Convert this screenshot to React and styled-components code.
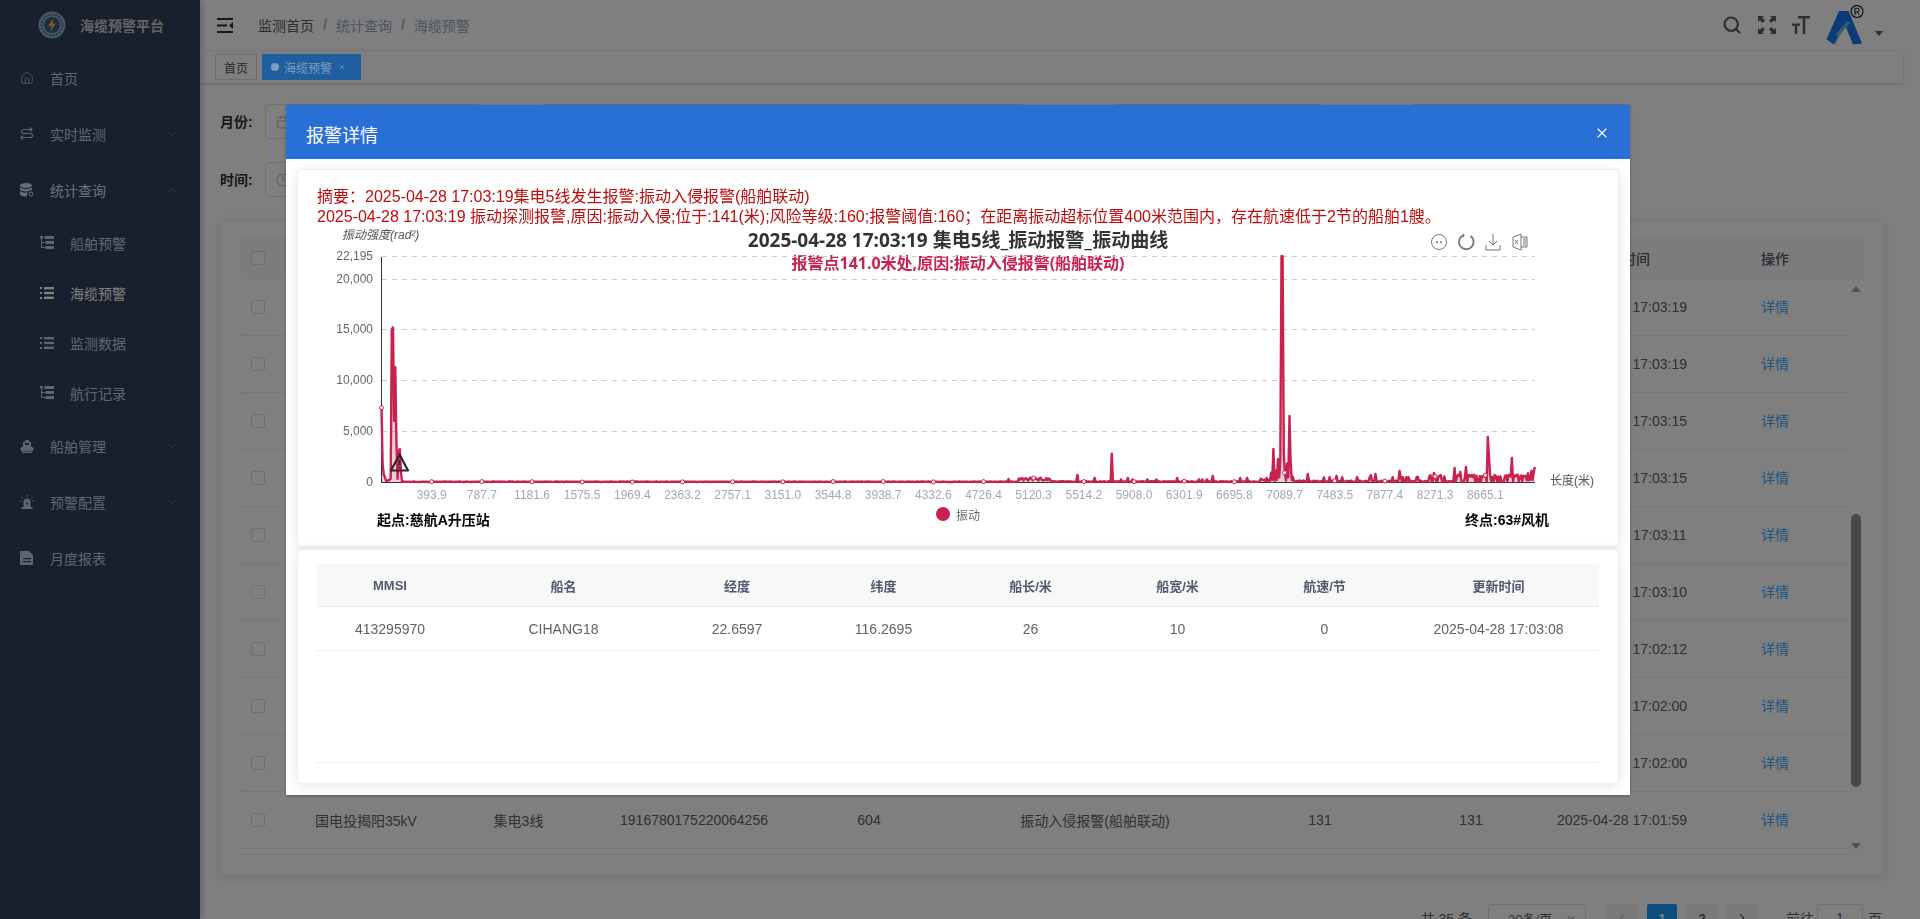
import React from 'react';
import styled, { createGlobalStyle } from 'styled-components';
import { Home, ChevronDown, ChevronUp, ChevronLeft, ChevronRight, Search, Calendar, Clock, X } from 'lucide-react';

const FONT = '"Liberation Sans", "Noto Sans CJK SC", sans-serif';
const TITLE_FONT = '"Noto Sans", "Noto Sans CJK SC", sans-serif';
const LINE_RED = '#c9224f';

const GlobalStyle = createGlobalStyle`
  html, body { margin: 0; padding: 0; height: 100%; overflow: hidden; background: #fff; }
  body { font-family: ${FONT}; font-size: 14px; color: #303133; }
  * { box-sizing: border-box; }
`;

const Shell = styled.div`
  display: flex;
  width: 1920px;
  height: 919px;
  overflow: hidden;
`;

const Sidebar = styled.aside`
  flex: 0 0 200px;
  background: #30415a;
  box-shadow: 2px 0 6px rgba(0, 0, 0, 0.2);
`;

const Brand = styled.div`
  display: flex;
  align-items: center;
  gap: 14px;
  height: 50px;
  padding-left: 38px;
  color: #c8c8c8;
  font-size: 14px;
  font-weight: bold;
`;

const MenuRow = styled.div`
  display: flex;
  align-items: center;
  height: ${p => (p.$sub ? 50 : 56)}px;
  padding: 0 21px 0 ${p => (p.$sub ? 40 : 20)}px;
  gap: 16px;
  font-size: 14px;
  color: ${p => (p.$active ? '#ffffff' : p.$open ? '#d9e0ea' : '#bfcbd9')};
  svg { flex: none; }
`;

const Caret = styled.span`
  display: flex;
  margin-left: auto;
  color: #8a97a8;
`;

const Main = styled.main`
  flex: 0 0 1703px;
  display: flex;
  flex-direction: column;
  > * { flex: none; }
`;

const TopBar = styled.header`
  display: flex;
  align-items: center;
  height: 50px;
  padding-left: 17px;
  color: #5a5e66;
`;

const Crumbs = styled.nav`
  display: flex;
  align-items: center;
  margin-left: 25px;
  font-size: 14px;
`;

const Crumb = styled.span`
  color: ${p => (p.$strong ? '#55585e' : '#97a8be')};
`;

const CrumbSep = styled.span`
  margin: 0 9px;
  color: #a9b5c6;
  font-weight: bold;
`;

const TopTools = styled.div`
  display: flex;
  align-items: center;
  gap: 16px;
  margin-left: auto;
  height: 50px;
  padding-right: 20px;
  color: #5a5e66;
`;

const Avatar = styled.div`
  display: flex;
  align-items: flex-end;
  gap: 11px;
`;

const CaretDown = styled.span`
  width: 0;
  height: 0;
  margin-bottom: 9px;
  border-left: 4px solid transparent;
  border-right: 4px solid transparent;
  border-top: 5px solid #5a5e66;
`;

const TagBar = styled.div`
  display: flex;
  align-items: center;
  gap: 5px;
  height: 33px;
  padding: 3px 0 3px 15px;
  border-top: 1px solid #f0f0f0;
  box-shadow: 0 1px 3px rgba(0, 0, 0, 0.18);
`;

const PlainTag = styled.span`
  display: flex;
  align-items: center;
  justify-content: center;
  width: 42px;
  height: 26px;
  border: 1px solid #d8dce5;
  font-size: 12px;
  color: #495060;
`;

/* sits above the mask in the reference: the blue stays bright */
const ActiveTag = styled.span`
  position: relative;
  z-index: 2100;
  display: flex;
  align-items: center;
  width: 99px;
  height: 26px;
  padding-left: 9px;
  background: #205f9f;
  font-size: 12px;
  color: #7f9dbd;
`;

const TagDot = styled.i`
  width: 8px;
  height: 8px;
  margin-right: 5px;
  border-radius: 50%;
  background: #7f9dbd;
`;

const TagClose = styled.span`
  display: flex;
  margin-left: 6px;
`;

const Filters = styled.section`
  display: flex;
  flex-direction: column;
  gap: 23px;
  padding: 21px 20px 23px;
`;

const FilterRow = styled.div`
  display: flex;
  align-items: center;
`;

const FilterLabel = styled.label`
  width: 45px;
  margin-bottom: 2px;
  font-size: 14px;
  font-weight: bold;
  color: #333;
`;

const FilterInput = styled.div`
  display: flex;
  align-items: center;
  width: ${p => p.$w}px;
  height: 35px;
  margin-right: ${p => p.$gap || 0}px;
  padding-left: 10px;
  border: 1px solid #dcdfe6;
  border-radius: 4px;
  color: #c0c4cc;
`;

const ListCard = styled.section`
  width: 1664px;
  height: 656px;
  margin-left: 20px;
  padding: 15px 19px 0 20px;
  border: 1px solid #ebeef5;
  border-radius: 4px;
  box-shadow: 0 2px 12px rgba(0, 0, 0, 0.1);
`;

const COLS = '54px 142px 163px 188px 162px 290px 160px 142px 160px 146px';

const ListHead = styled.div`
  display: grid;
  grid-template-columns: ${COLS};
  align-items: center;
  justify-items: center;
  width: 1623px;
  height: 43px;
  padding-right: 16px;
  background: #f8f8f9;
  font-size: 14px;
  font-weight: 500;
  color: #515a6e;
`;

const ListBody = styled.div`
  display: flex;
  width: 1623px;
  height: 569px;
`;

const ListRows = styled.div`
  width: 1607px;
`;

const ListRow = styled.div`
  display: grid;
  grid-template-columns: ${COLS};
  align-items: center;
  justify-items: center;
  height: 57px;
  border-bottom: 1px solid #ebeef5;
  font-size: 14px;
  color: #606266;
`;

const Check = styled.span`
  justify-self: start;
  width: 14px;
  height: 14px;
  margin-left: 10px;
  border: 1px solid #dcdfe6;
  border-radius: 2px;
  background: #fff;
`;

const DetailLink = styled.a`
  margin-bottom: 2px;
  color: #3fa9ff;
  cursor: pointer;
`;

const ScrollTrack = styled.div`
  display: flex;
  flex-direction: column;
  align-items: center;
  width: 16px;
  padding-top: 7px;
`;

const ScrollArrow = styled.i`
  width: 0;
  height: 0;
  border-left: 5px solid transparent;
  border-right: 5px solid transparent;
  ${p => (p.$down
    ? 'margin-top: auto; margin-bottom: -1px; border-top: 6px solid #a3a3a3;'
    : 'border-bottom: 6px solid #a3a3a3;')}
`;

const ScrollThumb = styled.div`
  width: 10px;
  height: 273px;
  margin-top: 222px;
  border-radius: 5px;
  background: #929292;
`;

const ListFooter = styled.div`
  width: 1607px;
  height: 7px;
  border-bottom: 1px solid #ebeef5;
`;

const Pager = styled.nav`
  display: flex;
  align-items: center;
  height: 28px;
  margin-top: 28px;
  padding-right: 21px;
  justify-content: flex-end;
  font-size: 14px;
  color: #606266;
`;

const PagerSelect = styled.div`
  display: flex;
  align-items: center;
  justify-content: space-between;
  width: 98px;
  height: 28px;
  margin: 0 21px 0 16px;
  padding: 0 8px 0 19px;
  border: 1px solid #dcdfe6;
  border-radius: 3px;
  font-size: 13px;
`;

const PageButton = styled.span`
  display: flex;
  align-items: center;
  justify-content: center;
  width: 30px;
  height: 28px;
  margin-right: 10px;
  border-radius: 2px;
  font-size: 13px;
  font-weight: bold;
  background: ${p => (p.$active ? '#1a9cff' : '#f4f4f5')};
  color: ${p => (p.$active ? '#fff' : p.$muted ? '#c0c4cc' : '#606266')};
`;

const PagerJump = styled.span`
  margin-left: 19px;
`;

const PagerInput = styled.span`
  display: flex;
  align-items: center;
  justify-content: center;
  width: 46px;
  height: 28px;
  margin: 0 5px 0 3px;
  border: 1px solid #dcdfe6;
  border-radius: 3px;
`;

const Mask = styled.div`
  position: fixed;
  inset: 0;
  z-index: 2000;
  background: rgba(0, 0, 0, 0.5);
`;

const Dialog = styled.div`
  position: relative;
  width: 1344px;
  height: 690px;
  margin: 105px 0 0 286px;
  background: #fff;
  box-shadow: 0 1px 3px rgba(0, 0, 0, 0.3);
`;

const DialogHead = styled.header`
  display: flex;
  align-items: center;
  height: 54px;
  padding: 10px 20px 6px;
  background: #2970d6;
  font-size: 18px;
  color: #fff;
`;

const DialogClose = styled.button`
  position: absolute;
  top: 20px;
  right: 20px;
  display: flex;
  padding: 0;
  border: none;
  background: none;
  color: #fff;
`;

const DialogBody = styled.div`
  display: flex;
  flex-direction: column;
  gap: 2px;
  padding: 10px 11px 0;
`;

const Card = styled.div`
  border: 1px solid #ebeef5;
  border-radius: 4px;
  background: #fff;
  box-shadow: 0 2px 12px rgba(0, 0, 0, 0.1);
`;

const ChartCard = styled(Card)`
  height: 378px;
  padding-top: 17px;
`;

const Summary = styled.p`
  margin: 0;
  padding-left: 19px;
  font-size: 16px;
  line-height: 20px;
  white-space: nowrap;
  color: #bf0d0d;
`;

const ChartSvg = styled.svg`
  display: block;
`;

const AxisText = styled.text`
  font-family: ${FONT};
  font-size: 12px;
  fill: ${p => p.$fill || '#666'};
  text-anchor: ${p => p.$anchor || 'middle'};
`;

const YName = styled.text`
  font-family: ${FONT};
  font-size: 12px;
  font-style: italic;
  fill: #555;
`;

const ChartTitle = styled.text`
  font-family: ${TITLE_FONT};
  font-size: 19px;
  font-weight: bold;
  fill: #333;
  text-anchor: middle;
`;

const ChartSubtitle = styled.text`
  font-family: ${TITLE_FONT};
  font-size: 16px;
  font-weight: bold;
  fill: ${LINE_RED};
  text-anchor: middle;
`;

const ChartFoot = styled.div`
  display: grid;
  grid-template-columns: 559px auto 1fr;
  padding: 0 69px 0 79px;
`;

const EndLabel = styled.span`
  margin-top: 3px;
  font-size: 14px;
  font-weight: bold;
  line-height: 20px;
  color: #000;
  text-align: ${p => (p.$right ? 'right' : 'left')};
`;

const Legend = styled.span`
  display: flex;
  align-items: center;
  gap: 6px;
  height: 14px;
  font-size: 12px;
  color: #666;
`;

const LegendDot = styled.i`
  width: 14px;
  height: 14px;
  border-radius: 50%;
  background: ${LINE_RED};
`;

const ShipCard = styled(Card)`
  height: 235px;
  padding: 14px 19px 0;
`;

const SHIP_COLS = '146px 201px 146px 147px 147px 147px 147px 201px';

const ShipHead = styled.div`
  display: grid;
  grid-template-columns: ${SHIP_COLS};
  align-items: center;
  justify-items: center;
  height: 43px;
  border-bottom: 1px solid #e4e7ed;
  background: #f8f8f9;
  font-size: 13px;
  font-weight: bold;
  color: #515a6e;
`;

const ShipRow = styled.div`
  display: grid;
  grid-template-columns: ${SHIP_COLS};
  align-items: center;
  justify-items: center;
  height: 44px;
  border-bottom: 1px solid #ebeef5;
  font-size: 14px;
  color: #606266;
`;

const ShipEmpty = styled.div`
  height: 112px;
  border-bottom: 1px solid #ebeef5;
`;

/* ---- icons ---- */

const CableLogo = () => (
  <svg width="28" height="28" viewBox="0 0 28 28">
    <circle cx="14" cy="14" r="13.4" fill="#8fb0c8" />
    <circle cx="14" cy="14" r="10.5" fill="none" stroke="#4a6f90" strokeWidth="2" strokeDasharray="2 1.5" />
    <circle cx="14" cy="14" r="8" fill="#3d5a78" />
    <path d="M15.5 7 10 15h3.4l-1.2 6 5.8-8.4h-3.4z" fill="#e8b93a" />
  </svg>
);

const SwapIcon = () => (
  <svg width="14" height="14" viewBox="0 0 14 14" fill="none" stroke="#bfcbd9" strokeWidth="1.2">
    <path d="M12 2.5H3.5a2 2 0 0 0-2 2v0a2 2 0 0 0 2 2h7a2 2 0 0 1 2 2v0a2 2 0 0 1-2 2H1.5" />
    <path d="M3 13l-2-2.5L3 8.5M10 .5l2 2-2 2" />
  </svg>
);

const DbIcon = () => (
  <svg width="14" height="14" viewBox="0 0 14 14" fill="#d0d8e2">
    <ellipse cx="6" cy="2.5" rx="6" ry="2.5" />
    <path d="M0 4v2c0 1.4 2.7 2.5 6 2.5s6-1.100 6-2.500V4c-1 1.200-3.300 2-6 2S1 5.200 0 4zM0 8v3c0 1.400 2.700 2.500 6 2.500h1A4 4 0 0 1 8 9.500c-.6.100-1.300.100-2 .100-2.700 0-5-.7-6-1.600z" />
    <circle cx="11" cy="11" r="2" fill="none" stroke="#d0d8e2" />
  </svg>
);

const TreeIcon = () => (
  <svg width="14" height="14" viewBox="0 0 14 14" fill="#bfcbd9">
    <rect x="0" y="0" width="3" height="2.600" />
    <rect x="4.500" y="0" width="9.500" height="3" />
    <rect x="5.500" y="5" width="8.500" height="3" />
    <rect x="5.500" y="10" width="8.500" height="3" />
    <path d="M1 2.500h1v3.500h3v1H2v4h3v1H1z" />
  </svg>
);

const ListIcon = ({ color = '#bfcbd9' }) => (
  <svg width="14" height="14" viewBox="0 0 14 14" fill={color}>
    <rect x="0" y="1" width="2" height="2" />
    <rect x="0" y="6" width="2" height="2" />
    <rect x="0" y="11" width="2" height="2" />
    <rect x="4" y="1" width="10" height="2.400" />
    <rect x="4" y="5.800" width="10" height="2.400" />
    <rect x="4" y="10.600" width="10" height="2.400" />
  </svg>
);

const ShipIcon = () => (
  <svg width="14" height="14" viewBox="0 0 14 14" fill="#bfcbd9">
    <path d="M5 1h4v2h2v4.500l3 1.500-1.500 3.500h-11L0 9l3-1.500V3h2z" />
    <path d="M2 13h10v1H2z" />
    <rect x="5" y="4" width="4" height="2" fill="#30415a" />
  </svg>
);

const AlarmIcon = () => (
  <svg width="14" height="14" viewBox="0 0 14 14" fill="#bfcbd9">
    <path d="M3.500 12V7a3.500 3.500 0 0 1 7 0v5z" />
    <path d="M1.500 12h11v2h-11z" />
    <path d="M7.600 6 5.800 9h1.300l-.7 2.400L8.400 8.300H7z" fill="#30415a" />
    <path d="M7 0v2M1.500 2l1.300 1.500M12.500 2l-1.300 1.500M0 6h1.600M12.400 6H14" stroke="#bfcbd9" fill="none" />
  </svg>
);

const ReportIcon = () => (
  <svg width="14" height="14" viewBox="0 0 14 14" fill="#bfcbd9">
    <path d="M1 0h8l4 4v9a1 1 0 0 1-1 1H1a1 1 0 0 1-1-1V1a1 1 0 0 1 1-1z" />
    <path d="M3 7h8v1.200H3zM3 10h8v1.200H3z" fill="#30415a" />
  </svg>
);

const MenuFoldIcon = () => (
  <svg width="16" height="15" viewBox="0 0 16 15" fill="#303133">
    <rect x="0" y="0" width="16" height="2" />
    <rect x="0" y="6.500" width="10" height="2" />
    <rect x="0" y="13" width="16" height="2" />
    <path d="M16 4v7l-4-3.500z" />
  </svg>
);

const FullIcon = () => (
  <svg width="18" height="18" viewBox="0 0 18 18" fill="currentColor">
    <path d="M0 0h6L4.200 1.800 7 4.600 4.600 7 1.800 4.200 0 6zM18 0v6l-1.800-1.800L13.400 7 11 4.600l2.800-2.800L12 0zM0 18v-6l1.800 1.800L4.600 11 7 13.400l-2.800 2.800L6 18zM18 18h-6l1.800-1.800L11 13.400l2.400-2.400 2.800 2.800L18 12z" />
  </svg>
);

const FontSizeIcon = () => (
  <svg width="18" height="18" viewBox="0 0 18 18" fill="currentColor">
    <path d="M6 0h12v2.400h-4.700V18h-2.600V2.400H6zM0 7.500h8v2.200H5.200V18H2.800V9.700H0z" />
  </svg>
);

const BrandMark = () => (
  <svg width="38" height="40" viewBox="0 0 38 40">
    <path d="M13 6h9.500l13.500 32.500-9 1L19.500 21 8 39.500 0.500 34.500z" fill="#1c74f4" />
    <path d="M8.500 39.500 14.500 25.500l1 .5L10 39.500z" fill="#bcd8dc" />
    <path d="M11 30 23 17" stroke="#58c8c0" strokeWidth="3" />
    <circle cx="31" cy="6.500" r="6" fill="none" stroke="#1a1a1a" strokeWidth="1.100" />
    <path d="M29 10V3.300h2.300a1.800 1.800 0 0 1 0 3.600H29M31.400 6.900l1.900 3.100" fill="none" stroke="#1a1a1a" />
  </svg>
);

const ToolGlyphs = () => (
  <g fill="none" stroke="#777" strokeWidth="1">
    <g transform="translate(1439 242)">
      <circle r="7.500" />
      <circle cx="-2" r=".6" fill="#777" />
      <circle cx="2" r=".6" fill="#777" />
    </g>
    <g transform="translate(1466.500 242)" strokeWidth="1.800">
      <path d="M-2.500-7A7.300 7.300 0 1 0 4-6" />
      <path d="M-4-8.500l2 2-2 2" strokeWidth="1" />
    </g>
    <g transform="translate(1493 242)">
      <path d="M0-8V3M-4-1l4 4 4-4M-7 3v5H7V3" />
    </g>
    <g transform="translate(1520 242)">
      <path d="M-7-5 1-8V8l-8-3z" />
      <path d="M1-5h6V5H1M3-3h3M3-1h3M3 1h3M3 3h3" />
      <path d="M-5-2l3 4M-2-2l-3 4" />
    </g>
  </g>
);

/* ---- chart data ---- */

const TICK_STEP = 393.85;
const xAt = m => 381.5 + (m / TICK_STEP) * 50.17;
const yAt = v => 482 - (v / 5000) * 50.85;
const Y_TICKS = [22195, 20000, 15000, 10000, 5000, 0];
const X_TICKS = ['393.9', '787.7', '1181.6', '1575.5', '1969.4', '2363.2', '2757.1', '3151.0', '3544.8', '3938.7', '4332.6', '4726.4', '5120.3', '5514.2', '5908.0', '6301.9', '6695.8', '7089.7', '7483.5', '7877.4', '8271.3', '8665.1'];

// metres, value of the spikes read from the curve
const PEAKS = [
  [0, 7300], [9, 1800], [18, 700], [27, 500], [36, 120], [45, 90], [54, 180], [63, 220], [72, 320],
  [81, 15000], [90, 15200], [99, 6000], [108, 11300], [117, 4000], [126, 300], [135, 3000], [144, 3250], [153, 900],
  [4926, 295], [5467, 690], [5600, 393], [5735, 2783], [5861, 393], [6246, 393], [6529, 590], [6741, 393], [6796, 393],
  [6946, 393], [6985, 900], [7004, 3245], [7022, 1100], [7035, 2262], [7052, 2100], [7061, 22195], [7070, 22195], [7079, 2850],
  [7088, 915], [7106, 1800], [7124, 6490], [7133, 2000], [7140, 3146], [7155, 490],
  [7270, 790], [7399, 450], [7493, 590], [7768, 690], [7799, 787], [7995, 1082], [8136, 490], [8262, 885],
  [8423, 1377], [8466, 983], [8514, 1475], [8561, 690], [8620, 590], [8683, 4425], [8691, 2400], [8718, 490],
  [8875, 2360], [8906, 690], [9024, 1100], [9055, 1475],
];

const buildSeries = () => {
  let seed = 20250428;
  const rnd = () => {
    seed = (seed * 1664525 + 1013904223) % 4294967296;
    return seed / 4294967296;
  };
  const points = [];
  for (let m = 0; m <= 9055; m += 9) {
    const r = rnd();
    let v = r * 50;
    if (m > 5000 && m < 5250) v = 120 + r * 320;
    else if (m >= 5250 && m < 6900) v = r > 0.93 ? 260 : r * 90;
    else if (m >= 6900 && m < 7170) v = r * 500;
    else if (m >= 7170 && m < 8200) v = r > 0.86 ? 250 + r * 240 : r * 170;
    else if (m >= 8200) v = r > 0.55 ? 200 + r * 520 : r * 180;
    if (m >= 8960) v += (m - 8960) * 6 * r;
    const peak = PEAKS.find(p => Math.abs(p[0] - m) <= 4.5);
    points.push([m, peak ? peak[1] : v]);
  }
  return points;
};

const SERIES = buildSeries();
const LINE_D = SERIES.map(([m, v], i) => `${i ? 'L' : 'M'}${xAt(m).toFixed(1)} ${yAt(v).toFixed(1)}`).join('');
const AREA_D = `${LINE_D}L${xAt(9055).toFixed(1)} 482L381.5 482Z`;
const MARKERS = [0, ...X_TICKS.map((_, i) => (i + 1) * TICK_STEP)].map(m => {
  const p = SERIES[Math.round(m / 9)];
  return [xAt(m), yAt(p ? p[1] : 0)];
});

const VibrationChart = () => (
  <ChartSvg width="1320" height="280" viewBox="298 227 1320 280">
    <YName x="342" y="239">振动强度(rad²)</YName>
    <ChartTitle x="958" y="247">2025-04-28 17:03:19 集电5线_振动报警_振动曲线</ChartTitle>
    <ChartSubtitle x="958" y="269">报警点141.0米处,原因:振动入侵报警(船舶联动)</ChartSubtitle>
    <ToolGlyphs />
    {Y_TICKS.map(v => (
      <g key={v}>
        {v > 0 && <line x1="382" x2="1535" y1={Math.round(yAt(v)) + 0.5} y2={Math.round(yAt(v)) + 0.5} stroke="#ccc" strokeDasharray="5 5" />}
        <AxisText x="373" y={yAt(v) + 4} $anchor="end">{v.toLocaleString('en-US')}</AxisText>
      </g>
    ))}
    <path d={AREA_D} fill={LINE_RED} fillOpacity="0.22" />
    <line x1="381.500" x2="381.500" y1="257" y2="482" stroke="#333" />
    <line x1="381" x2="1535" y1="482.500" y2="482.500" stroke="#333" />
    <path d={LINE_D} fill="none" stroke={LINE_RED} strokeWidth="2.400" strokeLinejoin="round" />
    {MARKERS.map(([x, y]) => (
      <circle key={x} cx={x} cy={y} r="2" fill="#fff" stroke={LINE_RED} />
    ))}
    <path d="M399.500 454.500 391 470.500h17z" fill="none" stroke="#2b2b2b" strokeWidth="2.200" strokeLinejoin="round" />
    <path d="M399.500 460v5.500M399.500 467v1.500" stroke="#2b2b2b" strokeWidth="1.600" />
    {X_TICKS.map((t, i) => (
      <AxisText key={t} x={xAt((i + 1) * TICK_STEP)} y="499" $fill="#a0a8bd">{t}</AxisText>
    ))}
    <AxisText x="1550" y="485" $anchor="start" $fill="#555">长度(米)</AxisText>
  </ChartSvg>
);

const MENU = [
  { label: '首页', icon: <Home size={14} strokeWidth={1.2} /> },
  { label: '实时监测', icon: <SwapIcon />, caret: 'down' },
  { label: '统计查询', icon: <DbIcon />, caret: 'up', open: true },
  { label: '船舶预警', icon: <TreeIcon />, sub: true },
  { label: '海缆预警', icon: <ListIcon color="#ffffff" />, sub: true, active: true },
  { label: '监测数据', icon: <ListIcon />, sub: true },
  { label: '航行记录', icon: <TreeIcon />, sub: true },
  { label: '船舶管理', icon: <ShipIcon />, caret: 'down' },
  { label: '预警配置', icon: <AlarmIcon />, caret: 'down' },
  { label: '月度报表', icon: <ReportIcon /> },
];

const ALARM_TIMES = ['17:03:19', '17:03:19', '17:03:15', '17:03:15', '17:03:11', '17:03:10', '17:02:12', '17:02:00', '17:02:00', '17:01:59'];
const LIST_HEAD = ['风场名称', '线路', '报警编号', '位置(米)', '报警类型', '风险等级', '报警阈值', '报警时间', '操作'];
const SHIP_HEAD = ['MMSI', '船名', '经度', '纬度', '船长/米', '船宽/米', '航速/节', '更新时间'];
const SHIP_ROW = ['413295970', 'CIHANG18', '22.6597', '116.2695', '26', '10', '0', '2025-04-28 17:03:08'];

export default function App() {
  return (
    <>
      <GlobalStyle />
      <Shell>
        <Sidebar>
          <Brand>
            <CableLogo />
            海缆预警平台
          </Brand>
          {MENU.map(item => (
            <MenuRow key={item.label} $sub={item.sub} $active={item.active} $open={item.open}>
              {item.icon}
              {item.label}
              {item.caret && (
                <Caret>{item.caret === 'up' ? <ChevronUp size={14} strokeWidth={1} /> : <ChevronDown size={14} strokeWidth={1} />}</Caret>
              )}
            </MenuRow>
          ))}
        </Sidebar>

        <Main>
          <TopBar>
            <MenuFoldIcon />
            <Crumbs>
              <Crumb $strong>监测首页</Crumb>
              <CrumbSep>/</CrumbSep>
              <Crumb>统计查询</Crumb>
              <CrumbSep>/</CrumbSep>
              <Crumb>海缆预警</Crumb>
            </Crumbs>
            <TopTools>
              <Search size={20} strokeWidth={2.6} />
              <FullIcon />
              <FontSizeIcon />
              <Avatar>
                <BrandMark />
                <CaretDown />
              </Avatar>
            </TopTools>
          </TopBar>

          <TagBar>
            <PlainTag>首页</PlainTag>
            <ActiveTag>
              <TagDot />
              海缆预警
              <TagClose><X size={8} strokeWidth={2} /></TagClose>
            </ActiveTag>
          </TagBar>

          <Filters>
            <FilterRow>
              <FilterLabel>月份:</FilterLabel>
              <FilterInput $w={216} $gap={59}><Calendar size={14} /></FilterInput>
              <FilterInput $w={485} $gap={87} />
              <FilterInput $w={212} $gap={85} />
              <FilterInput $w={220} />
            </FilterRow>
            <FilterRow>
              <FilterLabel>时间:</FilterLabel>
              <FilterInput $w={216}><Clock size={14} /></FilterInput>
            </FilterRow>
          </Filters>

          <ListCard>
            <ListHead>
              <Check />
              {LIST_HEAD.map(h => <span key={h}>{h}</span>)}
            </ListHead>
            <ListBody>
              <ListRows>
                {ALARM_TIMES.map((t, i) => (
                  <ListRow key={`${t}-${i}`}>
                    <Check />
                    <span>国电投揭阳35kV</span>
                    <span>集电3线</span>
                    <span>1916780175220064256</span>
                    <span>604</span>
                    <span>振动入侵报警(船舶联动)</span>
                    <span>131</span>
                    <span>131</span>
                    <span>2025-04-28 {t}</span>
                    <DetailLink>详情</DetailLink>
                  </ListRow>
                ))}
              </ListRows>
              <ScrollTrack>
                <ScrollArrow />
                <ScrollThumb />
                <ScrollArrow $down />
              </ScrollTrack>
            </ListBody>
            <ListFooter />
          </ListCard>

          <Pager>
            共 35 条
            <PagerSelect>20条/页<ChevronDown size={12} /></PagerSelect>
            <PageButton $muted><ChevronLeft size={14} /></PageButton>
            <PageButton $active>1</PageButton>
            <PageButton>2</PageButton>
            <PageButton><ChevronRight size={14} /></PageButton>
            <PagerJump>前往</PagerJump>
            <PagerInput>1</PagerInput>
            <span>页</span>
          </Pager>
        </Main>
      </Shell>

      <Mask>
        <Dialog>
          <DialogHead>报警详情</DialogHead>
          <DialogClose aria-label="关闭"><X size={16} strokeWidth={1.6} /></DialogClose>
          <DialogBody>
            <ChartCard>
              <Summary>摘要：2025-04-28 17:03:19集电5线发生报警:振动入侵报警(船舶联动)</Summary>
              <Summary>2025-04-28 17:03:19 振动探测报警,原因:振动入侵;位于:141(米);风险等级:160;报警阈值:160；在距离振动超标位置400米范围内，存在航速低于2节的船舶1艘。</Summary>
              <VibrationChart />
              <ChartFoot>
                <EndLabel>起点:慈航A升压站</EndLabel>
                <Legend><LegendDot />振动</Legend>
                <EndLabel $right>终点:63#风机</EndLabel>
              </ChartFoot>
            </ChartCard>
            <ShipCard>
              <ShipHead>{SHIP_HEAD.map(h => <span key={h}>{h}</span>)}</ShipHead>
              <ShipRow>{SHIP_ROW.map(c => <span key={c}>{c}</span>)}</ShipRow>
              <ShipEmpty />
            </ShipCard>
          </DialogBody>
        </Dialog>
      </Mask>
    </>
  );
}
